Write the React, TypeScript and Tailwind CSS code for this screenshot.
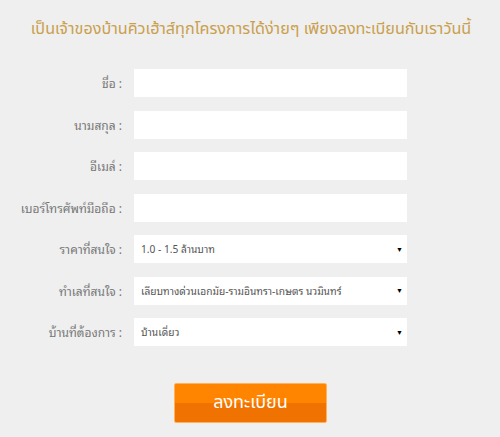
import React from "react";

const rows: { label: string; type: "input" | "select"; value?: string }[] = [
  { label: "ชื่อ :", type: "input" },
  { label: "นามสกุล :", type: "input" },
  { label: "อีเมล์ :", type: "input" },
  { label: "เบอร์โทรศัพท์มือถือ :", type: "input" },
  { label: "ราคาที่สนใจ :", type: "select", value: "1.0 - 1.5 ล้านบาท" },
  { label: "ทำเลที่สนใจ :", type: "select", value: "เลียบทางด่วนเอกมัย-รามอินทรา-เกษตร นวมินทร์" },
  { label: "บ้านที่ต้องการ :", type: "select", value: "บ้านเดี่ยว" },
];

export default function App() {
  return (
    <div className="w-[500px] h-[437px] bg-[#efefef] overflow-hidden font-['Noto_Sans_Thai_Looped','Liberation_Sans',sans-serif]">
      <h1 className="pt-[16px] pl-[2px] text-center whitespace-nowrap text-[16.2px] leading-[26px] text-[#c9a04e] font-['Noto_Sans_Thai',sans-serif]">
        เป็นเจ้าของบ้านคิวเฮ้าส์ทุกโครงการได้ง่ายๆ เพียงลงทะเบียนกับเราวันนี้
      </h1>
      <div className="mt-[27px] flex flex-col gap-[13.5px]">
        {rows.map((r) => (
          <div key={r.label} className="flex items-center h-[28px]">
            <div className="w-[134px] pr-[12px] text-right text-[12px] text-[#777] whitespace-nowrap">{r.label}</div>
            <div className="w-[273px] h-[28px] bg-white flex items-center justify-between pl-[7px] pr-[4px] text-[10.2px] text-[#555] whitespace-nowrap">
              {r.type === "select" && (
                <>
                  <span>{r.value}</span>
                  <span className="text-[7px] text-black">▼</span>
                </>
              )}
            </div>
          </div>
        ))}
      </div>
      <div className="mt-[37px] flex justify-center">
        <button className="w-[153px] h-[40px] ml-[1px] rounded-[2px] border border-[#ffb25a] bg-[linear-gradient(#ff8400_0%,#ff8400_50%,#f07200_50%,#f07200_100%)] text-white text-[18px] leading-none font-['Noto_Sans_Thai',sans-serif]">
          ลงทะเบียน
        </button>
      </div>
    </div>
  );
}
